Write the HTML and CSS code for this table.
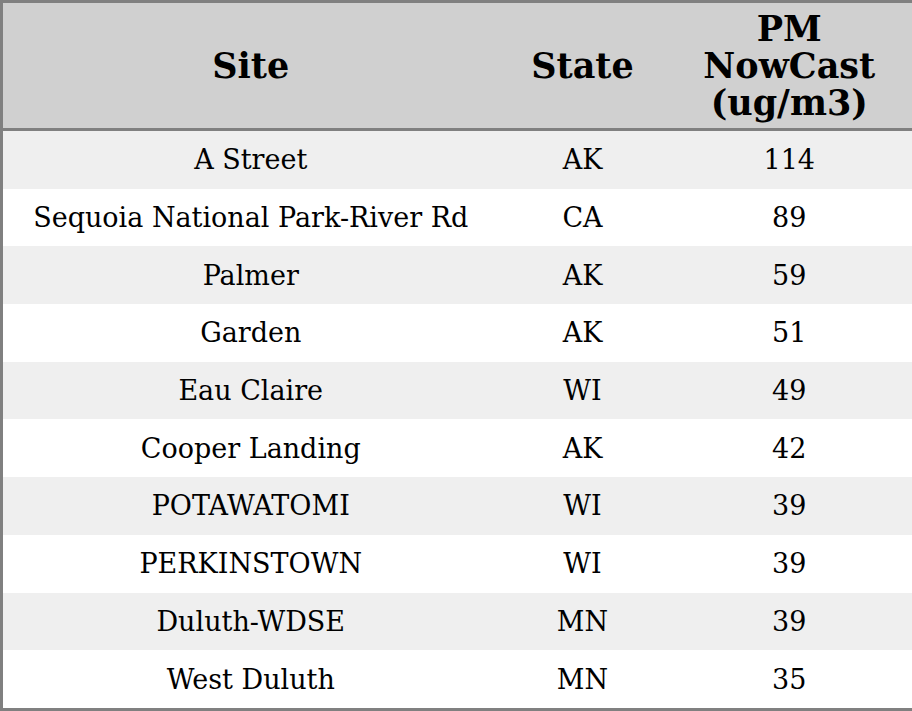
FILE: index.html
```html
<!DOCTYPE html>
<html>
<head>
<meta charset="utf-8">
<link rel="stylesheet" href="styles.css">
</head>
<body>
<table class="data">
  <colgroup>
    <col class="c-site">
    <col class="c-state">
    <col class="c-pm">
  </colgroup>
  <thead>
    <tr><th>Site</th><th>State</th><th>PM<br>NowCast<br>(ug/m3)</th></tr>
  </thead>
  <tbody>
    <tr><td>A Street</td><td>AK</td><td>114</td></tr>
    <tr><td>Sequoia National Park-River Rd</td><td>CA</td><td>89</td></tr>
    <tr><td>Palmer</td><td>AK</td><td>59</td></tr>
    <tr><td>Garden</td><td>AK</td><td>51</td></tr>
    <tr><td>Eau Claire</td><td>WI</td><td>49</td></tr>
    <tr><td>Cooper Landing</td><td>AK</td><td>42</td></tr>
    <tr><td>POTAWATOMI</td><td>WI</td><td>39</td></tr>
    <tr><td>PERKINSTOWN</td><td>WI</td><td>39</td></tr>
    <tr><td>Duluth-WDSE</td><td>MN</td><td>39</td></tr>
    <tr><td>West Duluth</td><td>MN</td><td>35</td></tr>
  </tbody>
</table>
</body>
</html>
```
FILE: styles.css
```css
html, body {
  margin: 0;
  padding: 0;
  background: #ffffff;
}
.data {
  width: 912px;
  height: 711px;
  border-collapse: collapse;
  border: 3px solid #808080;
  font-family: "DejaVu Serif", serif;
  color: #000;
  table-layout: fixed;
}
.c-site { width: 497px; }
.c-state { width: 168px; }
.c-pm { width: 247px; }
.data th {
  background: #d0d0d0;
  font-size: 35px;
  font-weight: bold;
  line-height: 37px;
  height: 125px;
  padding: 0;
  text-align: center;
  vertical-align: middle;
  border-bottom: 3px solid #808080;
}
.data td {
  font-size: 27px;
  height: 57.7px;
  padding: 0;
  text-align: center;
  vertical-align: middle;
}
.data tbody tr:nth-child(odd) td {
  background: #efefef;
}
.data tbody tr:nth-child(even) td {
  background: #ffffff;
}
```
